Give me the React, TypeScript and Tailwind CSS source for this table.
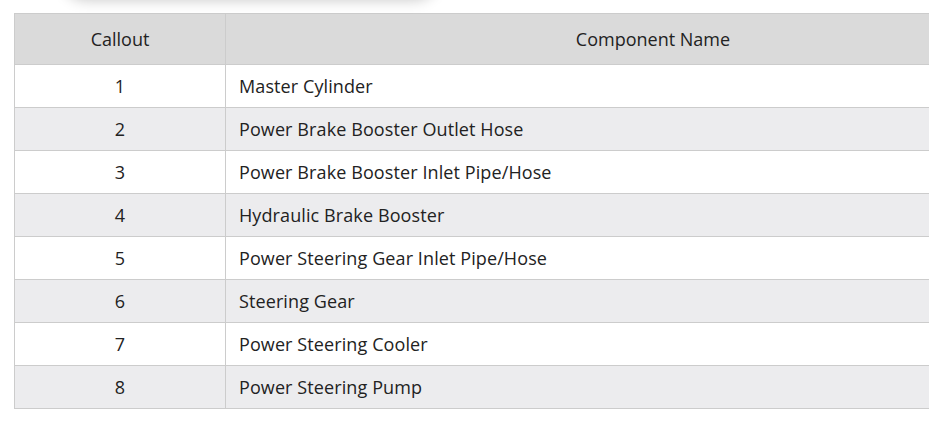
const rows: [number, string][] = [
  [1, "Master Cylinder"],
  [2, "Power Brake Booster Outlet Hose"],
  [3, "Power Brake Booster Inlet Pipe/Hose"],
  [4, "Hydraulic Brake Booster"],
  [5, "Power Steering Gear Inlet Pipe/Hose"],
  [6, "Steering Gear"],
  [7, "Power Steering Cooler"],
  [8, "Power Steering Pump"],
];

export default function App() {
  return (
    <div
      className="relative w-[929px] h-[437px] overflow-hidden bg-white text-[#222]"
      style={{ fontFamily: '"Open Sans", "Noto Sans", sans-serif' }}
    >
      {/* shadow of the panel above, cut off at the top */}
      <div className="absolute left-[62px] top-[-30px] w-[376px] h-[30px] rounded-b-3xl bg-white shadow-[0_0_14px_rgba(0,0,0,0.22)]" />
      <div className="pt-[13px] pl-[14px]">
        <table className="w-[1067px] border-collapse text-[18px]">
          <thead>
            <tr className="bg-[#dadada]">
              <th className="w-[211px] h-[51px] border border-[#cccccc] font-normal text-center">
                Callout
              </th>
              <th className="h-[51px] border border-[#cccccc] font-normal text-center">
                Component Name
              </th>
            </tr>
          </thead>
          <tbody>
            {rows.map(([n, name], i) => (
              <tr key={n} className={i % 2 === 1 ? "bg-[#ececee]" : "bg-white"}>
                <td className="h-[43px] border border-[#cccccc] text-center">{n}</td>
                <td className="h-[43px] border border-[#cccccc] px-[13px] tracking-[0.1px]">{name}</td>
              </tr>
            ))}
          </tbody>
        </table>
      </div>
    </div>
  );
}
